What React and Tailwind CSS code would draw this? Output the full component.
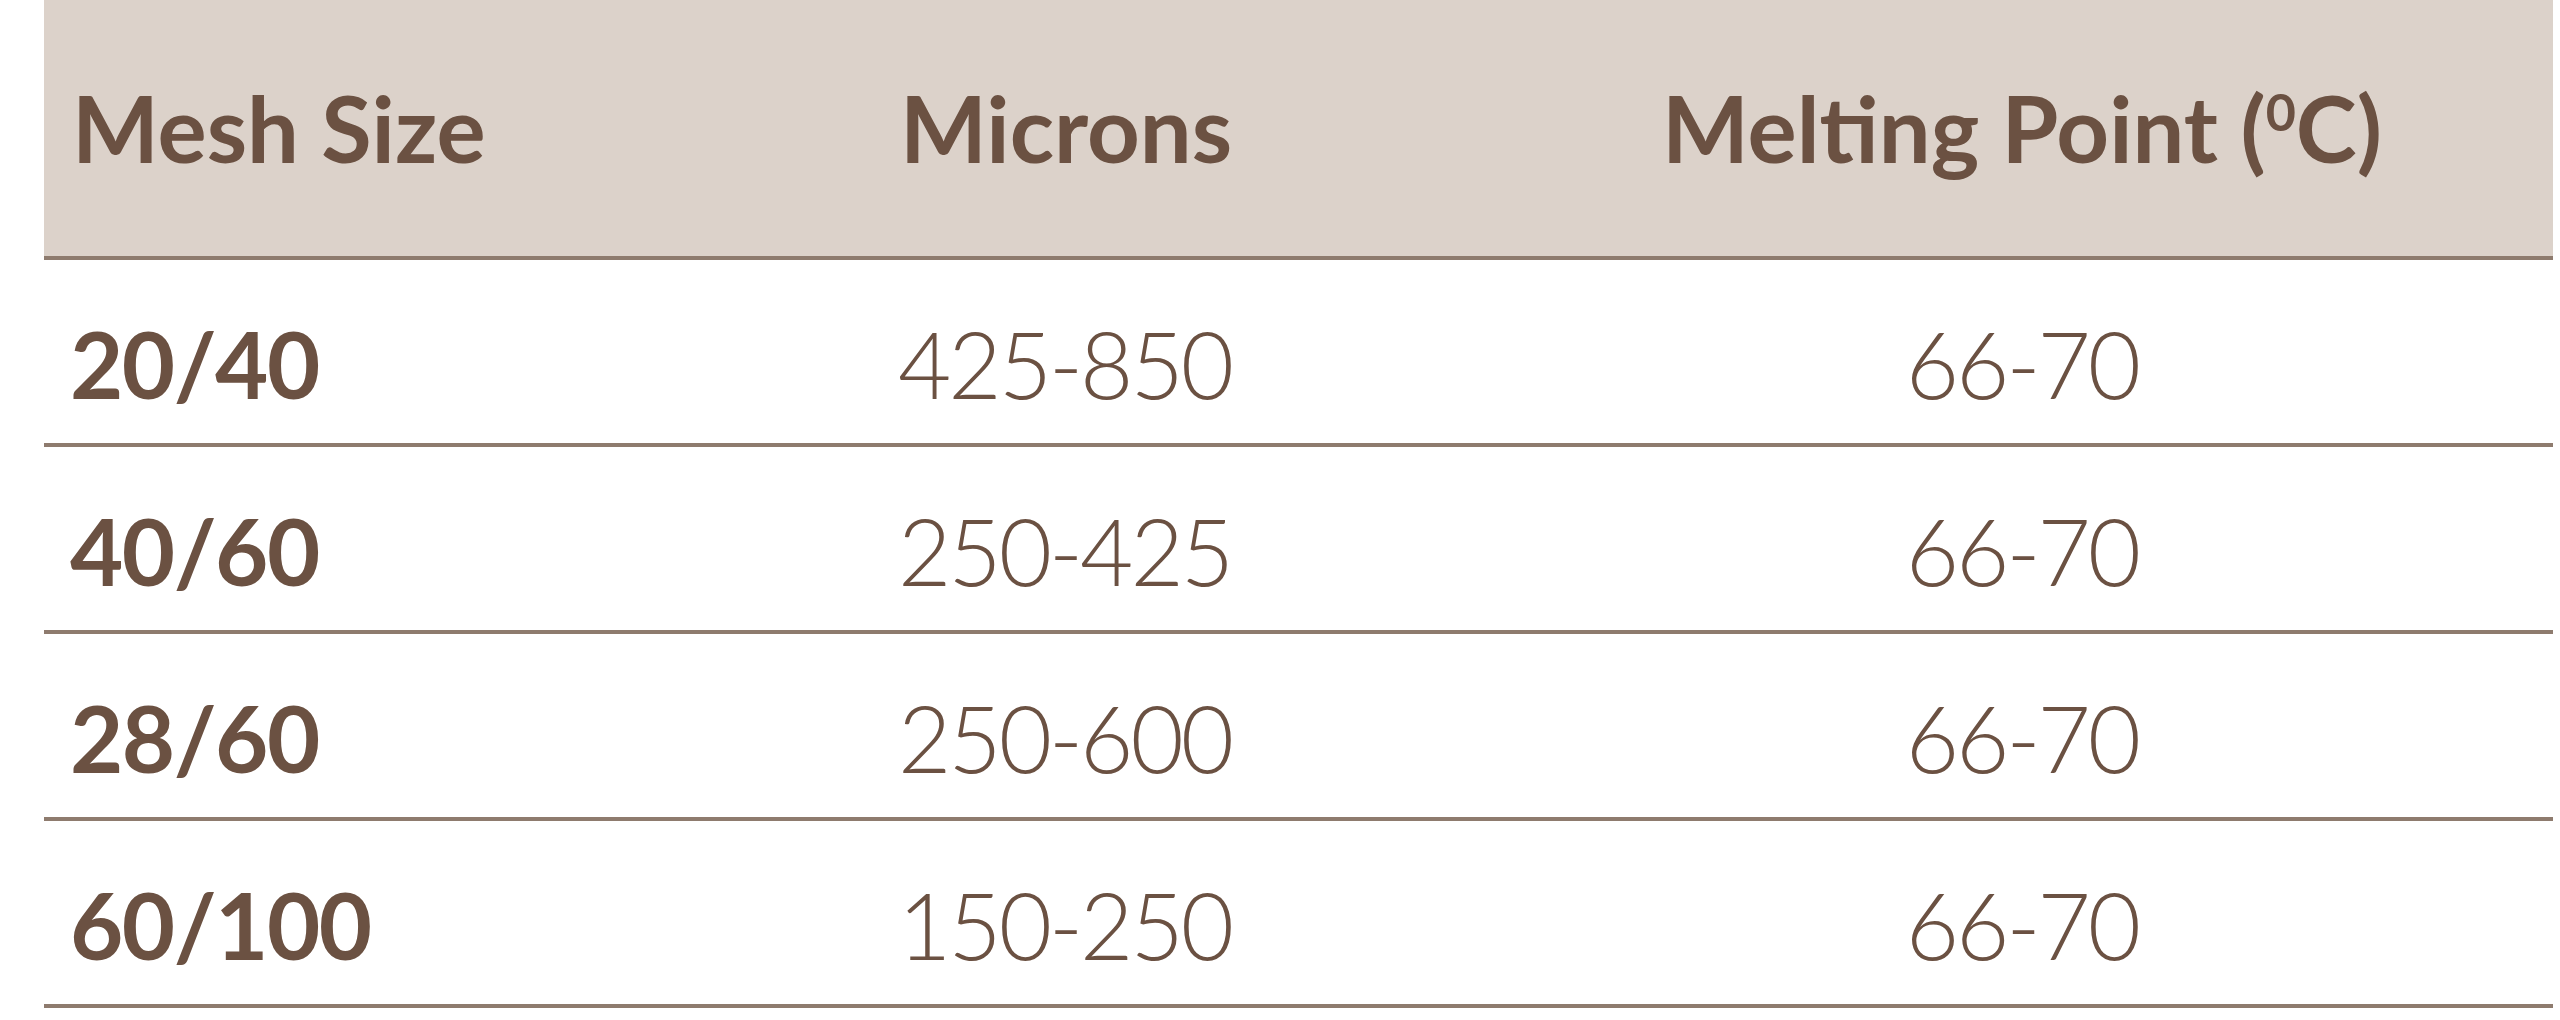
// Mesh size spec table

const rows = [
  { mesh: '20/40', microns: '425-850', melt: '66-70' },
  { mesh: '40/60', microns: '250-425', melt: '66-70' },
  { mesh: '28/60', microns: '250-600', melt: '66-70' },
  { mesh: '60/100', microns: '150-250', melt: '66-70' },
]

export default function App() {
  return (
    <div
      className="w-full h-[1020px] bg-white pl-[44px] pr-[7px] text-[#6b5142] overflow-hidden"
      style={{ fontFamily: 'Lato, "Open Sans", sans-serif' }}
    >
      {/* Header */}
      <div className="grid grid-cols-[826px_621px_1fr] h-[260px] bg-[#dcd2ca] border-b-4 border-[#8e7b6e] text-[92px] leading-none font-bold">
        <div className="flex items-center pl-[28px]">Mesh Size</div>
        <div className="flex items-center pl-[30px]">Microns</div>
        <div className="flex items-center justify-center">
          <span>
            Melting Point (<span className="text-[52px] align-[0.62em]">0</span>C)
          </span>
        </div>
      </div>

      {/* Rows */}
      {rows.map((r) => (
        <div
          key={r.mesh}
          className="grid grid-cols-[826px_621px_1fr] h-[187px] border-b-4 border-[#8e7b6e] text-[92px] leading-none pt-[24px]"
        >
          <div className="flex items-center pl-[26px] font-bold tracking-[-1.5px]">{r.mesh}</div>
          <div className="flex items-center pl-[28px] font-light tracking-[-3px]">{r.microns}</div>
          <div className="flex items-center justify-center font-light tracking-[-3px]">{r.melt}</div>
        </div>
      ))}
    </div>
  )
}
